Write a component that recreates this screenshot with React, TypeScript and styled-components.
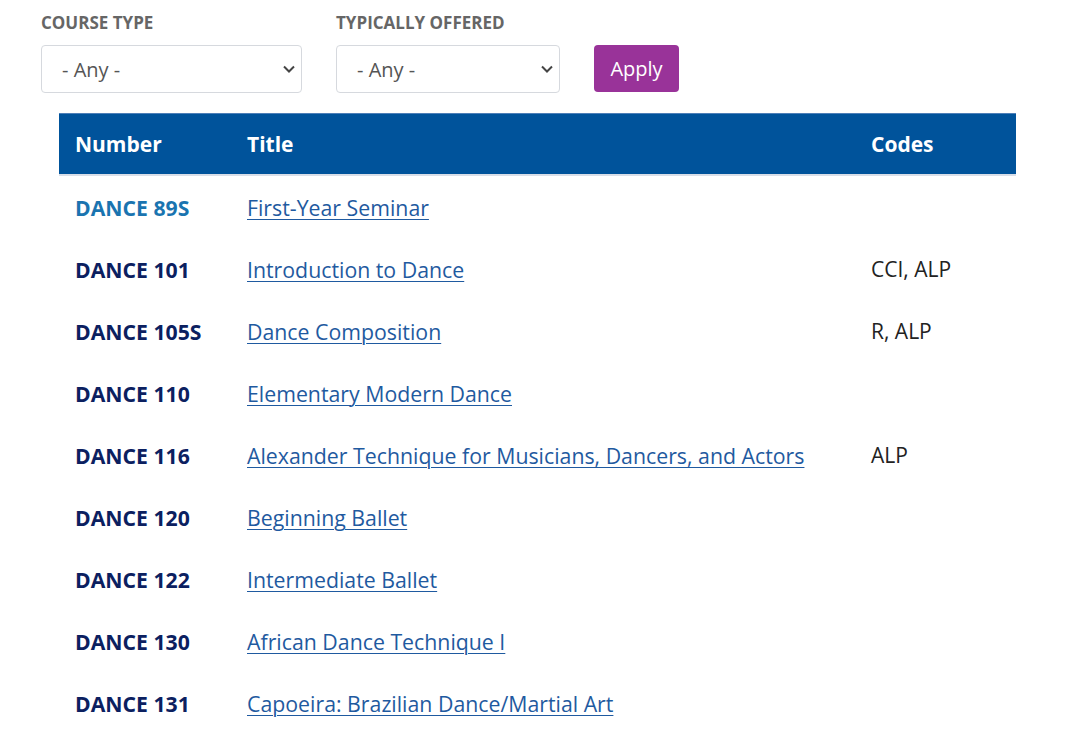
import React from 'react';
import styled, { createGlobalStyle } from 'styled-components';

const GlobalStyle = createGlobalStyle`
  body {
    margin: 0;
    background: #fff;
    font-family: 'Open Sans', 'Noto Sans', sans-serif;
  }
`;

type TCourse = {
  number: string;
  title: string;
  codes?: string;
  visited?: boolean;
};

const courses: TCourse[] = [
  { number: 'DANCE 89S', title: 'First-Year Seminar', visited: true },
  { number: 'DANCE 101', title: 'Introduction to Dance', codes: 'CCI, ALP' },
  { number: 'DANCE 105S', title: 'Dance Composition', codes: 'R, ALP' },
  { number: 'DANCE 110', title: 'Elementary Modern Dance' },
  {
    number: 'DANCE 116',
    title: 'Alexander Technique for Musicians, Dancers, and Actors',
    codes: 'ALP',
  },
  { number: 'DANCE 120', title: 'Beginning Ballet' },
  { number: 'DANCE 122', title: 'Intermediate Ballet' },
  { number: 'DANCE 130', title: 'African Dance Technique I' },
  { number: 'DANCE 131', title: 'Capoeira: Brazilian Dance/Martial Art' },
];

const PageStyled = styled.div`
  padding: 12px 0 0 41px;
`;

const FilterFormStyled = styled.form`
  display: flex;
  align-items: flex-end;
  gap: 34px;
  margin-bottom: 20px;
`;

const FilterGroupStyled = styled.div`
  display: flex;
  flex-direction: column;
`;

const FilterLabelStyled = styled.label`
  font-size: 17px;
  line-height: 22px;
  font-weight: 700;
  color: #666;
  text-transform: uppercase;
  margin-bottom: 11px;
`;

const SelectWrapStyled = styled.div<{ $width: number }>`
  position: relative;
  width: ${({ $width }) => $width}px;
`;

const SelectStyled = styled.select`
  appearance: none;
  width: 100%;
  height: 48px;
  border: 1px solid #d6d9de;
  border-radius: 4px;
  background: #fff;
  font-family: 'Open Sans', sans-serif;
  font-size: 20px;
  color: #555;
  padding: 0 20px;
  outline: none;
`;

const ChevronStyled = styled.svg`
  position: absolute;
  right: 6px;
  top: 19px;
  pointer-events: none;
`;

const ApplyButtonStyled = styled.button`
  width: 85px;
  height: 47px;
  border: none;
  border-radius: 4px;
  background: #993399;
  color: #fff;
  font-family: 'Open Sans', sans-serif;
  font-size: 20px;
  cursor: pointer;
  margin-bottom: 1px;
`;

const TableStyled = styled.table`
  width: 957px;
  margin-left: 18px;
  border-collapse: collapse;
  table-layout: fixed;
`;

const HeadCellStyled = styled.th<{ $width: number }>`
  width: ${({ $width }) => $width}px;
  height: 60px;
  background: #00539b;
  color: #fff;
  text-align: left;
  font-size: 21px;
  font-weight: 700;
  padding: 0 16px;
  border-top: 1px solid #4d7fb8;
  border-bottom: 2px solid #d8dee8;
`;

const CellStyled = styled.td`
  height: 62.1px;
  padding: 0 16px;
  font-size: 21px;
  color: #222;
  vertical-align: middle;
`;

const NumberStyled = styled.span<{ $visited?: boolean }>`
  font-weight: 700;
  font-size: 21.2px;
  color: ${({ $visited }) => ($visited ? '#1a74b0' : '#0b2060')};
`;

const TitleLinkStyled = styled.a`
  color: #1f5aa0;
  font-size: 21.3px;
  text-decoration: underline;
  text-underline-offset: 3px;
  text-decoration-thickness: 1px;
`;

const Chevron = () => (
  <ChevronStyled width="14" height="10" viewBox="0 0 14 10">
    <path d="M2 2.5 L7 7.5 L12 2.5" fill="none" stroke="#444" strokeWidth="2" />
  </ChevronStyled>
);

const App = () => {
  return (
    <PageStyled>
      <GlobalStyle />
      <FilterFormStyled onSubmit={(e) => e.preventDefault()}>
        <FilterGroupStyled>
          <FilterLabelStyled>Course Type</FilterLabelStyled>
          <SelectWrapStyled $width={261}>
            <SelectStyled>
              <option>- Any -</option>
            </SelectStyled>
            <Chevron />
          </SelectWrapStyled>
        </FilterGroupStyled>
        <FilterGroupStyled>
          <FilterLabelStyled>Typically Offered</FilterLabelStyled>
          <SelectWrapStyled $width={224}>
            <SelectStyled>
              <option>- Any -</option>
            </SelectStyled>
            <Chevron />
          </SelectWrapStyled>
        </FilterGroupStyled>
        <ApplyButtonStyled type="submit">Apply</ApplyButtonStyled>
      </FilterFormStyled>
      <TableStyled>
        <thead>
          <tr>
            <HeadCellStyled $width={140}>Number</HeadCellStyled>
            <HeadCellStyled $width={592}>Title</HeadCellStyled>
            <HeadCellStyled $width={129}>Codes</HeadCellStyled>
          </tr>
        </thead>
        <tbody>
          {courses.map((course) => (
            <tr key={course.number}>
              <CellStyled>
                <NumberStyled $visited={course.visited}>
                  {course.number}
                </NumberStyled>
              </CellStyled>
              <CellStyled>
                <TitleLinkStyled href="#">{course.title}</TitleLinkStyled>
              </CellStyled>
              <CellStyled>{course.codes}</CellStyled>
            </tr>
          ))}
        </tbody>
      </TableStyled>
    </PageStyled>
  );
};

export default App;
